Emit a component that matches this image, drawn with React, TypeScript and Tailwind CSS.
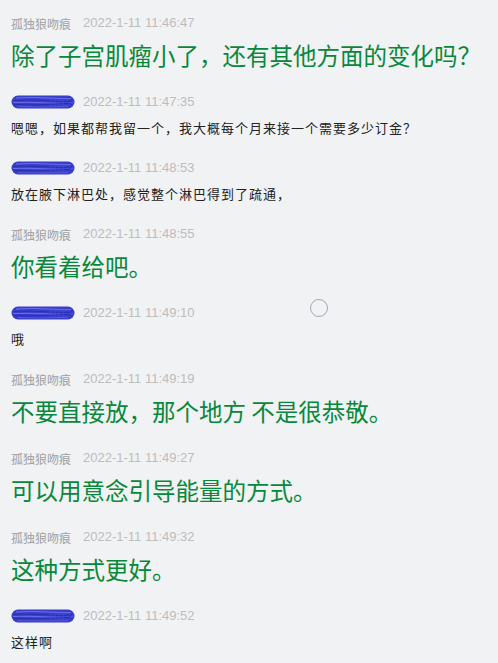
import type { ReactNode } from "react";

type Entry = {
  id: number;
  author: "name" | "hidden";
  time: string;
  text: string;
};

const ENTRIES: Entry[] = [
  { id: 1, author: "name", time: "2022-1-11 11:46:47", text: "除了子宫肌瘤小了，还有其他方面的变化吗？" },
  { id: 2, author: "hidden", time: "2022-1-11 11:47:35", text: "嗯嗯，如果都帮我留一个，我大概每个月来接一个需要多少订金？" },
  { id: 3, author: "hidden", time: "2022-1-11 11:48:53", text: "放在腋下淋巴处，感觉整个淋巴得到了疏通，" },
  { id: 4, author: "name", time: "2022-1-11 11:48:55", text: "你看着给吧。" },
  { id: 5, author: "hidden", time: "2022-1-11 11:49:10", text: "哦" },
  { id: 6, author: "name", time: "2022-1-11 11:49:19", text: "不要直接放，那个地方 不是很恭敬。" },
  { id: 7, author: "name", time: "2022-1-11 11:49:27", text: "可以用意念引导能量的方式。" },
  { id: 8, author: "name", time: "2022-1-11 11:49:32", text: "这种方式更好。" },
  { id: 9, author: "hidden", time: "2022-1-11 11:49:52", text: "这样啊" },
];

const CJK = "font-['Noto_Sans_CJK_SC',sans-serif]";

// blue marker scribble hiding the nickname
function Scribble() {
  return (
    <svg width="64" height="14" viewBox="0 0 64 14" className="shrink-0">
      <rect x="0.5" y="0.5" width="63" height="13" rx="6.5" fill="#383dcc" />
      <path d="M5 3 Q20 2 38 3 T60 3.5" stroke="#7076ea" strokeWidth="0.9" fill="none" />
      <path d="M3 5.5 Q22 4.5 40 6 T61 5.5" stroke="#2b30b4" strokeWidth="1" fill="none" />
      <path d="M2 7.5 Q22 7 42 8 T62 7.5" stroke="#6268e6" strokeWidth="1.1" fill="none" />
      <path d="M3 9.5 Q25 10.5 44 9 T61 10" stroke="#2a2fb0" strokeWidth="1" fill="none" />
      <path d="M7 11.5 Q30 12.5 57 11.5" stroke="#5a60e0" strokeWidth="0.8" fill="none" />
      <path d="M40 2 V12 M44 2 V12 M48 2 V12 M52 2 V12" stroke="#4e54dc" strokeWidth="0.6" fill="none" />
    </svg>
  );
}

function Header({ entry }: { entry: Entry }) {
  return (
    <div className="flex h-4 items-center">
      <div className="w-[72px] shrink-0">
        {entry.author === "name" ? (
          <span className={`${CJK} text-[12px] leading-4 text-[#a0a0a0]`}>孤独狼吻痕</span>
        ) : (
          <Scribble />
        )}
      </div>
      <span className="font-['Liberation_Sans',sans-serif] text-[13px] leading-4 text-[#bdbdbd]">
        {entry.time}
      </span>
    </div>
  );
}

function Message({ entry }: { entry: Entry }): ReactNode {
  if (entry.author === "name") {
    return (
      <p className={`${CJK} mt-2 whitespace-nowrap text-[23.5px] leading-[33px] text-[#07883a]`}>
        {entry.text}
      </p>
    );
  }
  return (
    <p className={`${CJK} mt-2 text-[13px] leading-5 tracking-[1px] text-[#222]`}>{entry.text}</p>
  );
}

export default function App() {
  return (
    <div className="relative min-h-[663px] w-[498px] bg-[#f1f2f4] px-[11px] pt-[15px]">
      <div className="flex flex-col gap-[22px]">
        {ENTRIES.map((entry) => (
          <div key={entry.id}>
            <Header entry={entry} />
            <Message entry={entry} />
          </div>
        ))}
      </div>
      <span className="absolute left-[310px] top-[299px] h-[18px] w-[18px] rounded-full border-[1.5px] border-[#a6a6bc]" />
    </div>
  );
}
